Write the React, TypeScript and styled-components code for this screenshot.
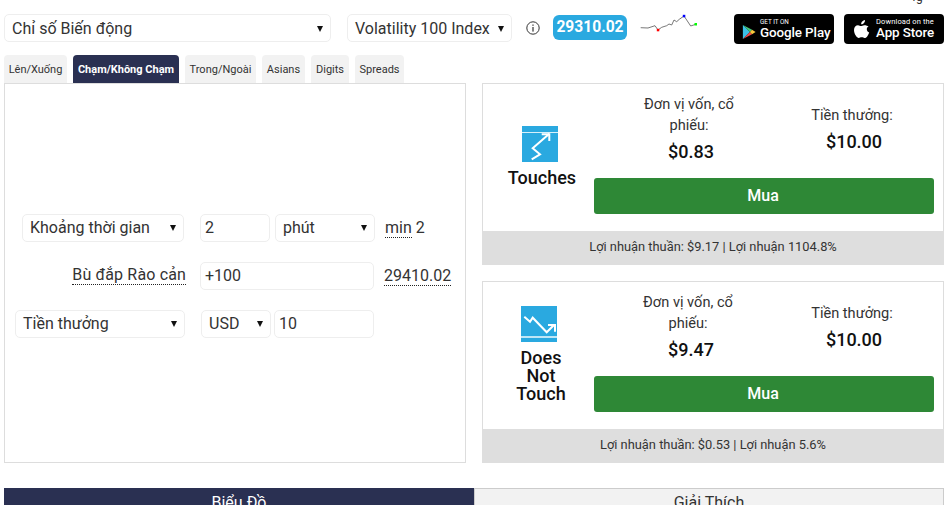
import React from 'react';
import styled, { createGlobalStyle } from 'styled-components';

const Global = createGlobalStyle`
  html, body { margin: 0; padding: 0; height: 505px; overflow: hidden; background: #fff; }
  body { font-family: Roboto, "Noto Sans", sans-serif; color: #333; font-size: 16px; }
  * { box-sizing: border-box; }
`;

const Page = styled.div`
  position: relative;
  width: 947px;
  height: 505px;
  overflow: hidden;
  padding: 14px 3px 0 4px;
`;
const TopFragment = styled.span`
  position: absolute;
  top: -9px;
  left: 912px;
  font-size: 12px;
  line-height: 12px;
  color: #333;
`;
const Header = styled.header`
  display: flex;
  align-items: flex-start;
  height: 30px;
`;
const SelectBox = styled.div<{ $w: number }>`
  width: ${p => p.$w}px;
  flex: none;
  height: 28px;
  display: flex;
  align-items: center;
  justify-content: space-between;
  padding: 0 7px 0 7px;
  border: 1px solid #eee;
  border-radius: 5px;
  background: #fff;
  font-size: 16px;
  color: #333;
  white-space: nowrap;
`;
const Caret = styled.i`
  flex: none;
  width: 0;
  height: 0;
  margin-top: 1px;
  border-left: 3px solid transparent;
  border-right: 3px solid transparent;
  border-top: 6px solid #111;
`;
const Gap = styled.div<{ $w: number }>`
  flex: none;
  width: ${p => p.$w}px;
`;
const InfoWrap = styled.div`
  flex: none;
  width: 14px;
  height: 28px;
  display: flex;
  align-items: center;
`;
const Quote = styled.div`
  flex: none;
  width: 74px;
  height: 25px;
  margin-top: 1px;
  border-radius: 6px;
  background: #2aa9e0;
  color: #fff;
  font-size: 15.6px;
  font-weight: 700;
  line-height: 25px;
  text-align: center;
`;
const Spark = styled.svg`
  flex: none;
  display: block;
  margin-top: -14px;
`;
const StoreBadge = styled.div<{ $apple?: boolean }>`
  flex: none;
  width: 100px;
  height: 30px;
  background: #000;
  border-radius: 4px;
  display: flex;
  align-items: center;
  color: #fff;
  padding-left: ${p => (p.$apple ? 9 : 8)}px;
  gap: ${p => (p.$apple ? 6 : 4)}px;
`;
const PlaySlot = styled.div`
  margin-top: 5px;
  display: flex;
`;
const StoreText = styled.div`
  display: flex;
  flex-direction: column;
  white-space: nowrap;
`;
const StoreSmall = styled.span<{ $spaced?: boolean }>`
  font-size: ${p => (p.$spaced ? 7.5 : 6.3)}px;
  line-height: 8px;
  letter-spacing: ${p => (p.$spaced ? 0.12 : 0)}px;
  font-weight: 400;
`;
const StoreBig = styled.span`
  font-size: 13.4px;
  line-height: 14px;
  letter-spacing: -0.1px;
  font-weight: 500;
`;
const Tabs = styled.nav`
  display: flex;
  gap: 6px;
  margin-top: 11px;
  height: 28px;
`;
const Tab = styled.div<{ $active?: boolean; $w: number }>`
  width: ${p => p.$w}px;
  height: 28px;
  display: flex;
  align-items: center;
  justify-content: center;
  white-space: nowrap;
  font-size: 11px;
  font-weight: ${p => (p.$active ? 700 : 400)};
  color: ${p => (p.$active ? '#fff' : '#333')};
  background: ${p => (p.$active ? '#2a3052' : '#f2f2f2')};
  border-radius: 4px 4px 0 0;
`;
const Content = styled.main`
  display: flex;
  gap: 16px;
  height: 380px;
`;
const FormPanel = styled.section`
  width: 462px;
  height: 380px;
  border: 1px solid #ddd;
  display: flex;
  flex-direction: column;
  justify-content: center;
  gap: 20px;
  padding-top: 5px;
`;
const FormRow = styled.div`
  display: grid;
  grid-template-columns: 181px 175px auto;
  column-gap: 14px;
  align-items: center;
  height: 28px;
`;
const LabelCell = styled.div<{ $pr?: number }>`
  display: flex;
  justify-content: flex-end;
  padding-right: ${p => p.$pr ?? 0}px;
`;
const FieldCell = styled.div<{ $offset?: number; $gap: number }>`
  display: flex;
  gap: ${p => p.$gap}px;
  margin-left: ${p => p.$offset ?? 0}px;
`;
const Input = styled.div<{ $w: number }>`
  width: ${p => p.$w}px;
  height: 28px;
  line-height: 26px;
  border: 1px solid #eee;
  border-radius: 5px;
  padding-left: 4px;
  font-size: 16px;
  color: #333;
`;
const Dotted = styled.span`
  border-bottom: 1px dotted #222;
  line-height: 18px;
  display: inline-block;
`;
const FieldLabel = styled(Dotted)`
  letter-spacing: 0.15px;
  white-space: nowrap;
`;
const Note = styled.div<{ $shift: number }>`
  font-size: 16px;
  margin-left: ${p => p.$shift}px;
  white-space: nowrap;
  height: 20px;
  line-height: 20px;
`;
const Cards = styled.section`
  width: 462px;
  display: flex;
  flex-direction: column;
  gap: 16px;
`;
const Card = styled.article`
  height: 182px;
  border: 1px solid #ddd;
  border-bottom: none;
  display: flex;
  flex-direction: column;
`;
const CardMain = styled.div`
  flex: 1;
  display: flex;
`;
const Kind = styled.div<{ $nudge?: number }>`
  width: 111px;
  flex: none;
  display: flex;
  flex-direction: column;
  align-items: center;
  justify-content: center;
  gap: 7px;
  padding: 0 0 3px 3px;
  margin-left: ${p => p.$nudge ?? 0}px;
  margin-right: ${p => -(p.$nudge ?? 0)}px;
`;
const KindIcon = styled.svg`
  display: block;
`;
const KindName = styled.div`
  position: relative;
  left: 2px;
  font-size: 18px;
  line-height: 18px;
  font-weight: 500;
  color: #111;
  text-align: center;
  width: 70px;
`;
const Purchase = styled.div`
  flex: 1;
  display: flex;
  flex-direction: column;
  justify-content: flex-end;
  padding: 0 9px 17px 0;
`;
const Stats = styled.div`
  display: grid;
  grid-template-columns: 190px 136px;
  align-items: center;
  margin-bottom: 10px;
`;
const Stat = styled.div`
  display: flex;
  flex-direction: column;
  align-items: center;
  text-align: center;
`;
const StatLabel = styled.div<{ $nudge?: number }>`
  width: 112px;
  font-size: 14.6px;
  line-height: 21px;
  color: #333;
  position: relative;
  left: ${p => p.$nudge ?? 0}px;
`;
const StatValue = styled.div`
  font-size: 18px;
  line-height: 32px;
  font-weight: 500;
  color: #111;
  padding-left: 4px;
`;
const BuyButton = styled.button`
  width: 340px;
  height: 36px;
  border: 0;
  border-radius: 3px;
  background: #2e8836;
  color: #fff;
  font-family: inherit;
  font-size: 16px;
  font-weight: 500;
  padding: 0 2px 2px 0;
`;
const CardFoot = styled.div`
  height: 34px;
  margin: 0 -1px;
  background: #dedede;
  font-size: 12.85px;
  line-height: 32px;
  text-align: center;
  color: #333;
`;
const BottomTabs = styled.nav`
  display: flex;
  margin-top: 25px;
  width: 940px;
`;
const BottomTab = styled.div<{ $active?: boolean }>`
  width: 470px;
  height: 40px;
  text-align: center;
  font-size: 16px;
  line-height: 26px;
  padding-top: 1px;
  background: ${p => (p.$active ? '#2a3052' : '#f2f2f2')};
  color: ${p => (p.$active ? '#fff' : '#333')};
  border: 1px solid ${p => (p.$active ? '#2a3052' : '#ccc')};
`;

const Select = ({ w, children }: { w: number; children: React.ReactNode }) => (
  <SelectBox $w={w}>
    <span>{children}</span>
    <Caret />
  </SelectBox>
);

const PlayLogo = () => (
  <svg width="14" height="16" viewBox="0 0 16 18">
    <polygon points="1,1 9,9 1,17" fill="#3cc0e8" />
    <polygon points="1,1 11.5,6.5 9,9" fill="#45c77a" />
    <polygon points="1,17 11.5,11.5 9,9" fill="#ea4a4a" />
    <polygon points="11.5,6.5 15.5,9 11.5,11.5 9,9" fill="#f8c83c" />
  </svg>
);
const AppleLogo = () => (
  <svg width="17" height="20" viewBox="0 0 17 20">
    <path
      fill="#fff"
      d="M12 1c.1 1.2-.3 2.2-1 3-.7.8-1.7 1.4-2.8 1.3C8 4.2 8.5 3.100 9.200 2.400 9.900 1.600 11 1.100 12 1zM15.600 7.300c-1.100.7-1.800 1.700-1.800 3 0 1.500.9 2.700 2.400 3.300-.4 1.200-1 2.300-1.700 3.300-.9 1.300-1.800 2.100-2.900 2.100-1.100 0-1.500-.7-2.900-.7-1.400 0-1.900.7-2.900.7-1.100 0-2-.9-2.900-2.200C1.700 15 1 12.900 1 11c0-3 1.900-4.700 4-4.700 1.200 0 2.200.8 3 .8.700 0 1.900-.9 3.300-.9 1.800 0 3.300.7 4.300 1.100z"
    />
  </svg>
);

export default function App() {
  return (
    <Page>
      <Global />
      <TopFragment>fg</TopFragment>
      <Header>
        <Select w={327}>Chỉ số Biến động</Select>
        <Gap $w={16} />
        <Select w={165}>Volatility 100 Index</Select>
        <Gap $w={14} />
        <InfoWrap>
          <svg width="14" height="14" viewBox="0 0 14 14">
            <circle cx="7" cy="7" r="6.2" fill="none" stroke="#333" strokeWidth="1" />
            <rect x="6.4" y="6" width="1.2" height="4.6" fill="#333" />
            <rect x="6.4" y="3.500" width="1.2" height="1.300" fill="#333" />
          </svg>
        </InfoWrap>
        <Gap $w={13} />
        <Quote>29310.02</Quote>
        <Gap $w={13} />
        <Spark width="60" height="34" viewBox="640 0 60 34">
          <polyline
            points="640.7,27.7 648,28 655,25.7 658,30 661.700,27.300 666.700,25.700 669,24 671.700,25 674,20 676.700,21.700 679.300,19.300 684,16 690.700,26 695.700,24.300"
            fill="none"
            stroke="#555"
            strokeWidth="0.8"
          />
          <rect x="656.800" y="28.800" width="2.500" height="2.500" fill="#f00" />
          <rect x="682.800" y="14.800" width="2.500" height="2.500" fill="#00f" />
          <rect x="694.500" y="23" width="2.500" height="2.500" fill="#0f0" />
        </Spark>
        <Gap $w={34} />
        <StoreBadge>
          <PlaySlot>
            <PlayLogo />
          </PlaySlot>
          <StoreText>
            <StoreSmall>GET IT ON</StoreSmall>
            <StoreBig>Google Play</StoreBig>
          </StoreText>
        </StoreBadge>
        <Gap $w={10} />
        <StoreBadge $apple>
          <AppleLogo />
          <StoreText>
            <StoreSmall $spaced>Download on the</StoreSmall>
            <StoreBig>App Store</StoreBig>
          </StoreText>
        </StoreBadge>
      </Header>
      <Tabs>
        <Tab $w={63}>Lên/Xuống</Tab>
        <Tab $w={106} $active>Chạm/Không Chạm</Tab>
        <Tab $w={71}>Trong/Ngoài</Tab>
        <Tab $w={43}>Asians</Tab>
        <Tab $w={38}>Digits</Tab>
        <Tab $w={49}>Spreads</Tab>
      </Tabs>
      <Content>
        <FormPanel>
          <FormRow>
            <LabelCell $pr={2}>
              <Select w={162}>Khoảng thời gian</Select>
            </LabelCell>
            <FieldCell $gap={5}>
              <Input $w={70}>2</Input>
              <Select w={100}>phút</Select>
            </FieldCell>
            <Note $shift={-4}>
              <Dotted>min</Dotted> 2
            </Note>
          </FormRow>
          <FormRow>
            <LabelCell>
              <FieldLabel>Bù đắp Rào cản</FieldLabel>
            </LabelCell>
            <FieldCell $gap={0}>
              <Input $w={174}>+100</Input>
            </FieldCell>
            <Note $shift={-5}>
              <Dotted>29410.02</Dotted>
            </Note>
          </FormRow>
          <FormRow>
            <LabelCell $pr={1}>
              <Select w={170}>Tiền thưởng</Select>
            </LabelCell>
            <FieldCell $gap={3} $offset={1}>
              <Select w={70}>USD</Select>
              <Input $w={100}>10</Input>
            </FieldCell>
          </FormRow>
        </FormPanel>
        <Cards>
          <Card>
            <CardMain>
              <Kind>
                <KindIcon width="36" height="36" viewBox="0 0 36 36">
                  <rect width="36" height="36" fill="#2aa9e0" />
                  <rect y="6" width="36" height="1" fill="#d8f0fa" />
                  <polyline points="9.700,33.300 18,28.300 10.700,22.300 27.300,7.800" fill="none" stroke="#fff" strokeWidth="2" />
                  <polyline points="19.700,8.300 27.300,8.300 27.300,15" fill="none" stroke="#fff" strokeWidth="2" />
                </KindIcon>
                <KindName>Touches</KindName>
              </Kind>
              <Purchase>
                <Stats>
                  <Stat>
                    <StatLabel>Đơn vị vốn, cổ phiếu:</StatLabel>
                    <StatValue>$0.83</StatValue>
                  </Stat>
                  <Stat>
                    <StatLabel>Tiền thưởng:</StatLabel>
                    <StatValue>$10.00</StatValue>
                  </Stat>
                </Stats>
                <BuyButton>Mua</BuyButton>
              </Purchase>
            </CardMain>
            <CardFoot>Lợi nhuận thuần: $9.17 | Lợi nhuận 1104.8%</CardFoot>
          </Card>
          <Card>
            <CardMain>
              <Kind $nudge={-1}>
                <KindIcon width="36" height="36" viewBox="0 0 36 36">
                  <rect width="36" height="36" fill="#2aa9e0" />
                  <rect y="30" width="36" height="2" fill="#bfe6f6" />
                  <polyline points="3.300,10.700 9,15.700 11.700,11.700 25.700,26.300 33,19" fill="none" stroke="#fff" strokeWidth="2" />
                  <polyline points="27,19 34,19 34,25.700" fill="none" stroke="#fff" strokeWidth="2" />
                </KindIcon>
                <KindName>Does Not Touch</KindName>
              </Kind>
              <Purchase>
                <Stats>
                  <Stat>
                    <StatLabel $nudge={-1}>Đơn vị vốn, cổ phiếu:</StatLabel>
                    <StatValue>$9.47</StatValue>
                  </Stat>
                  <Stat>
                    <StatLabel>Tiền thưởng:</StatLabel>
                    <StatValue>$10.00</StatValue>
                  </Stat>
                </Stats>
                <BuyButton>Mua</BuyButton>
              </Purchase>
            </CardMain>
            <CardFoot>Lợi nhuận thuần: $0.53 | Lợi nhuận 5.6%</CardFoot>
          </Card>
        </Cards>
      </Content>
      <BottomTabs>
        <BottomTab $active>Biểu Đồ</BottomTab>
        <BottomTab>Giải Thích</BottomTab>
      </BottomTabs>
    </Page>
  );
}
